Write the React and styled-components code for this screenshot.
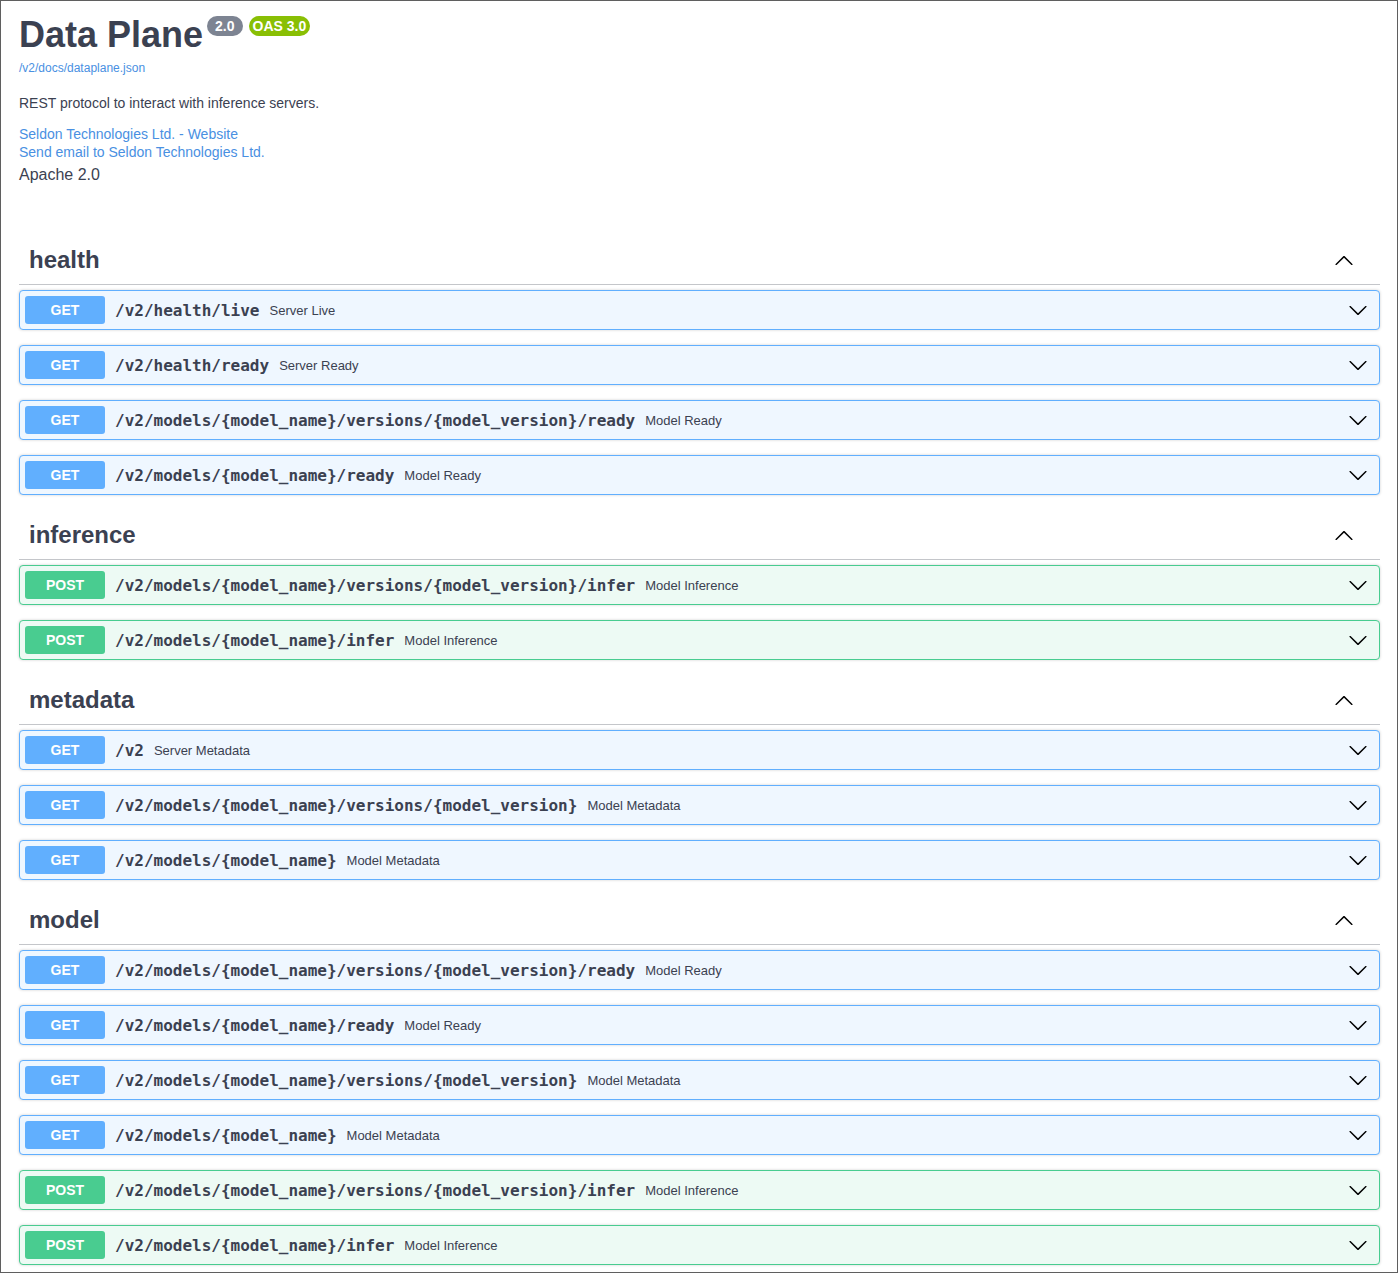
import React from 'react';
import styled, { createGlobalStyle } from 'styled-components';

const GlobalStyle = createGlobalStyle`
  html, body {
    margin: 0;
    padding: 0;
    background: #fff;
  }
  body {
    font-family: "Liberation Sans", Arial, sans-serif;
    color: #3b4151;
  }
`;

const methodColors = {
  GET: { main: '#61affe', bg: '#eff7ff' },
  POST: { main: '#49cc90', bg: '#edfaf4' },
};

const Frame = styled.div`
  box-sizing: border-box;
  width: 1398px;
  height: 1273px;
  border: 1px solid #5f5f5f;
  padding: 13px 17px 0 18px;
  overflow: hidden;
`;

const Info = styled.div`
  margin-bottom: 50px;
`;

const TitleRow = styled.div`
  display: flex;
  align-items: flex-start;
`;

const Title = styled.h2`
  margin: 0;
  font-size: 36px;
  line-height: 41px;
  font-weight: 700;
  color: #3b4151;
`;

const Stamp = styled.span`
  margin: 2px 0 0 ${props => props.gap}px;
  padding: 0 ${props => props.pad}px;
  height: 20px;
  line-height: 20px;
  border-radius: 57px;
  background: ${props => props.color};
  color: #fff;
  font-size: 14px;
  font-weight: 700;
`;

const SpecLink = styled.a`
  display: block;
  margin-top: 6px;
  font-size: 12px;
  line-height: 15px;
  color: #4990e2;
  text-decoration: none;
`;

const Description = styled.p`
  margin: 18px 0 0;
  font-size: 14px;
  line-height: 18px;
`;

const Contact = styled.div`
  margin-top: 13px;
  display: flex;
  flex-direction: column;
`;

const ContactLink = styled.a`
  font-size: 14px;
  line-height: 18px;
  color: #4990e2;
  text-decoration: none;
`;

const License = styled.div`
  margin-top: 4px;
  font-size: 16px;
  line-height: 20px;
`;

const Section = styled.section`
  margin: 0;
`;

const TagHeading = styled.h3`
  box-sizing: border-box;
  margin: 0 0 5px;
  height: 50px;
  display: flex;
  align-items: center;
  justify-content: space-between;
  padding: 0 26px 0 10px;
  border-bottom: 1px solid rgba(59, 65, 81, 0.3);
  font-size: 24px;
  font-weight: 700;
  color: #3b4151;
`;

const Opblock = styled.div`
  margin-bottom: 15px;
  display: flex;
  align-items: center;
  padding: 5px 11px 5px 5px;
  border: 1px solid ${props => methodColors[props.method].main};
  background: ${props => methodColors[props.method].bg};
  border-radius: 4px;
  box-shadow: 0 0 3px rgba(0, 0, 0, 0.19);
`;

const Method = styled.span`
  width: 80px;
  padding: 6px 0;
  text-align: center;
  border-radius: 3px;
  background: ${props => methodColors[props.method].main};
  color: #fff;
  font-size: 14px;
  font-weight: 700;
  flex-shrink: 0;
`;

const Path = styled.span`
  padding: 0 10px;
  font-family: "DejaVu Sans Mono", monospace;
  font-size: 16px;
  font-weight: 700;
  color: #3b4151;
`;

const Summary = styled.span`
  flex: 1;
  font-size: 13px;
  color: #3b4151;
`;

const ArrowDown = () => (
  <svg width="20" height="20" viewBox="0 0 20 20" fill="#000">
    <path d="M17.418 6.109c.272-.268.709-.268.979 0s.271.701 0 .969l-7.908 7.83c-.27.268-.707.268-.979 0l-7.908-7.83c-.27-.268-.27-.701 0-.969.271-.268.709-.268.979 0L10 13.25l7.418-7.141z" />
  </svg>
);

const ArrowUp = () => (
  <svg width="20" height="20" viewBox="0 0 20 20" fill="#000">
    <path d="M17.418 14.908c.272.268.709.268.979 0s.271-.701 0-.969l-7.908-7.83c-.27-.268-.707-.268-.979 0l-7.908 7.83c-.27.268-.27.701 0 .969.271.268.709.268.979 0L10 7.767l7.418 7.141z" />
  </svg>
);

const sections = [
  {
    tag: 'health',
    ops: [
      ['GET', '/v2/health/live', 'Server Live'],
      ['GET', '/v2/health/ready', 'Server Ready'],
      ['GET', '/v2/models/{model_name}/versions/{model_version}/ready', 'Model Ready'],
      ['GET', '/v2/models/{model_name}/ready', 'Model Ready'],
    ],
  },
  {
    tag: 'inference',
    ops: [
      ['POST', '/v2/models/{model_name}/versions/{model_version}/infer', 'Model Inference'],
      ['POST', '/v2/models/{model_name}/infer', 'Model Inference'],
    ],
  },
  {
    tag: 'metadata',
    ops: [
      ['GET', '/v2', 'Server Metadata'],
      ['GET', '/v2/models/{model_name}/versions/{model_version}', 'Model Metadata'],
      ['GET', '/v2/models/{model_name}', 'Model Metadata'],
    ],
  },
  {
    tag: 'model',
    ops: [
      ['GET', '/v2/models/{model_name}/versions/{model_version}/ready', 'Model Ready'],
      ['GET', '/v2/models/{model_name}/ready', 'Model Ready'],
      ['GET', '/v2/models/{model_name}/versions/{model_version}', 'Model Metadata'],
      ['GET', '/v2/models/{model_name}', 'Model Metadata'],
      ['POST', '/v2/models/{model_name}/versions/{model_version}/infer', 'Model Inference'],
      ['POST', '/v2/models/{model_name}/infer', 'Model Inference'],
    ],
  },
];

const App = () => (
  <>
    <GlobalStyle />
    <Frame>
      <Info>
        <TitleRow>
          <Title>Data Plane</Title>
          <Stamp color="#7d8492" gap={4} pad={8}>2.0</Stamp>
          <Stamp color="#89bf04" gap={6} pad={4}>OAS 3.0</Stamp>
        </TitleRow>
        <SpecLink href="#">/v2/docs/dataplane.json</SpecLink>
        <Description>REST protocol to interact with inference servers.</Description>
        <Contact>
          <ContactLink href="#">Seldon Technologies Ltd. - Website</ContactLink>
          <ContactLink href="#">Send email to Seldon Technologies Ltd.</ContactLink>
        </Contact>
        <License>Apache 2.0</License>
      </Info>
      {sections.map(section => (
        <Section key={section.tag}>
          <TagHeading>
            <span>{section.tag}</span>
            <ArrowUp />
          </TagHeading>
          {section.ops.map(([method, path, summary]) => (
            <Opblock key={method + path + section.tag} method={method}>
              <Method method={method}>{method}</Method>
              <Path>{path}</Path>
              <Summary>{summary}</Summary>
              <ArrowDown />
            </Opblock>
          ))}
        </Section>
      ))}
    </Frame>
  </>
);

export default App;
